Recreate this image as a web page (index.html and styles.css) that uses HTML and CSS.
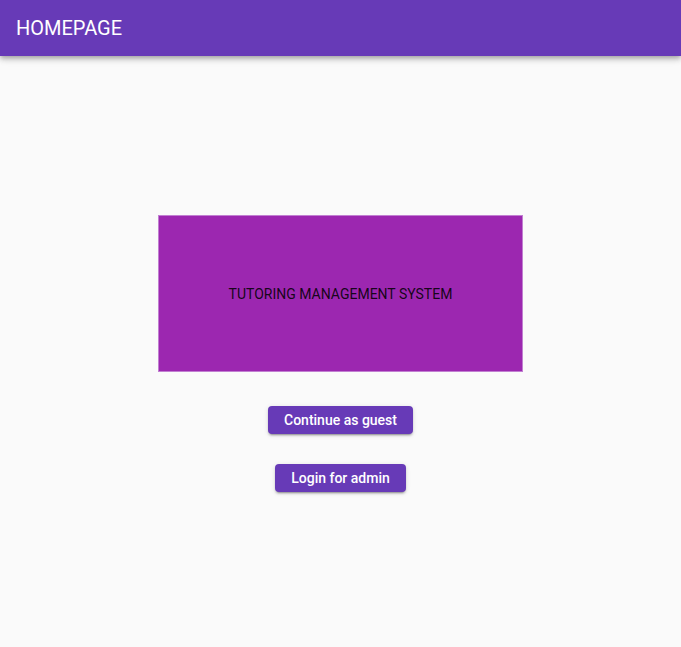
FILE: index.html
```html
<!DOCTYPE html>
<html>
<head>
<meta charset="utf-8">
<title>Homepage</title>
<link rel="stylesheet" href="styles.css">
</head>
<body>
<header class="toolbar"><span class="toolbar-title">HOMEPAGE</span></header>
<main class="content">
  <div class="banner">TUTORING MANAGEMENT SYSTEM</div>
  <div class="actions">
    <button class="btn">Continue as guest</button>
    <button class="btn">Login for admin</button>
  </div>
</main>
</body>
</html>
```

FILE: styles.css
```css
html, body {
  margin: 0;
  padding: 0;
  height: 100%;
}
body {
  background: #fafafa;
  font-family: Roboto, "Noto Sans", sans-serif;
  color: rgba(0,0,0,.87);
}
.toolbar {
  height: 56px;
  background: #673ab7;
  color: #fff;
  display: flex;
  align-items: center;
  padding: 0 16px;
  box-shadow: 0 2px 4px -1px rgba(0,0,0,.2), 0 4px 5px 0 rgba(0,0,0,.14), 0 1px 10px 0 rgba(0,0,0,.12);
  position: relative;
  z-index: 2;
}
.toolbar-title {
  font-size: 20px;
  font-weight: 400;
  letter-spacing: 0;
}
.content {
  display: flex;
  flex-direction: column;
  align-items: center;
  padding-top: 159px;
}
.banner {
  box-sizing: border-box;
  width: 365px;
  height: 157px;
  background: #9c27b0;
  border: 1px solid #c17fd1;
  display: flex;
  align-items: center;
  justify-content: center;
  font-size: 14px;
  color: rgba(0,0,0,.87);
}
.actions {
  display: flex;
  flex-direction: column;
  align-items: center;
  gap: 30px;
  margin-top: 34px;
}
.btn {
  font-family: Roboto, "Noto Sans", sans-serif;
  font-size: 14px;
  font-weight: 500;
  color: #fff;
  background: #673ab7;
  border: none;
  border-radius: 4px;
  height: 28px;
  line-height: 28px;
  padding: 0 16px;
  box-shadow: 0 3px 1px -2px rgba(0,0,0,.2), 0 2px 2px 0 rgba(0,0,0,.14), 0 1px 5px 0 rgba(0,0,0,.12);
  cursor: pointer;
}
```
